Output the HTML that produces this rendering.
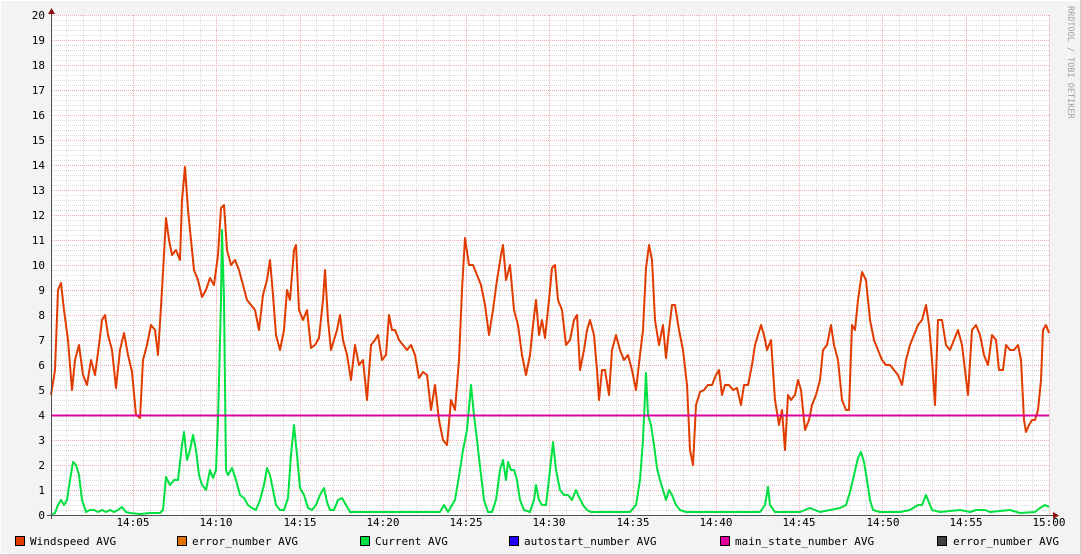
<!DOCTYPE html>
<html><head><meta charset="utf-8"><style>
body{margin:0;background:#f3f3f3;}
svg{display:block;font-family:"DejaVu Sans Mono","Liberation Mono",monospace;}
</style></head><body>
<svg width="1081" height="555" viewBox="0 0 1081 555" xmlns="http://www.w3.org/2000/svg">
<defs>
<pattern id="hm" x="0" y="15" width="2" height="5" patternUnits="userSpaceOnUse"><rect x="0" y="0" width="1" height="1" fill="#dadada" shape-rendering="crispEdges"/></pattern>
<pattern id="hM" x="0" y="15" width="2" height="25" patternUnits="userSpaceOnUse"><rect x="0" y="0" width="1" height="1" fill="#f0b0b0" shape-rendering="crispEdges"/></pattern>
</defs>
<rect x="0" y="0" width="1081" height="555" fill="#f3f3f3"/>
<path d="M0.5 554.5V0.5H1080.5" stroke="#fff" fill="none"/>
<path d="M0 554.5H1080.5V0" stroke="#cfcfcf" fill="none"/>
<rect x="51" y="15" width="998" height="500" fill="#fff"/>
<g shape-rendering="crispEdges">
<rect x="52" y="15" width="997" height="500" fill="url(#hm)"/>
<path stroke="#dadada" stroke-width="1" stroke-dasharray="1 1" fill="none" d="M66.5 15V515M83.5 15V515M100.5 15V515M116.5 15V515M150.5 15V515M166.5 15V515M183.5 15V515M200.5 15V515M233.5 15V515M250.5 15V515M266.5 15V515M283.5 15V515M316.5 15V515M333.5 15V515M350.5 15V515M366.5 15V515M399.5 15V515M416.5 15V515M433.5 15V515M449.5 15V515M483.5 15V515M499.5 15V515M516.5 15V515M533.5 15V515M566.5 15V515M583.5 15V515M599.5 15V515M616.5 15V515M649.5 15V515M666.5 15V515M683.5 15V515M699.5 15V515M733.5 15V515M749.5 15V515M766.5 15V515M783.5 15V515M816.5 15V515M832.5 15V515M849.5 15V515M866.5 15V515M899.5 15V515M916.5 15V515M932.5 15V515M949.5 15V515M982.5 15V515M999.5 15V515M1016.5 15V515M1032.5 15V515"/>
<rect x="52" y="15" width="997" height="500" fill="url(#hM)"/>
<path stroke="#f0b0b0" stroke-width="1" stroke-dasharray="1 1" fill="none" d="M133.5 15V515M216.5 15V515M300.5 15V515M383.5 15V515M466.5 15V515M549.5 15V515M633.5 15V515M716.5 15V515M799.5 15V515M882.5 15V515M966.5 15V515M1049.5 15V515"/>
</g>
<g font-size="11" fill="#000" text-anchor="end">
<text x="45" y="19">20</text><text x="45" y="44">19</text><text x="45" y="69">18</text><text x="45" y="94">17</text><text x="45" y="119">16</text><text x="45" y="144">15</text><text x="45" y="169">14</text><text x="45" y="194">13</text><text x="45" y="219">12</text><text x="45" y="244">11</text><text x="45" y="269">10</text><text x="45" y="294">9</text><text x="45" y="319">8</text><text x="45" y="344">7</text><text x="45" y="369">6</text><text x="45" y="394">5</text><text x="45" y="419">4</text><text x="45" y="444">3</text><text x="45" y="469">2</text><text x="45" y="494">1</text><text x="45" y="519">0</text>
</g>
<g font-size="11" fill="#000" text-anchor="middle">
<text x="133" y="526">14:05</text><text x="216" y="526">14:10</text><text x="300" y="526">14:15</text><text x="383" y="526">14:20</text><text x="466" y="526">14:25</text><text x="549" y="526">14:30</text><text x="633" y="526">14:35</text><text x="716" y="526">14:40</text><text x="799" y="526">14:45</text><text x="883" y="526">14:50</text><text x="966" y="526">14:55</text><text x="1049" y="526">15:00</text>
</g>
<polyline fill="none" stroke="#00e040" stroke-width="2" stroke-linejoin="round" points="51,515 55,513 58,505 61,500 64,505 67,500 70,480 73,462 76,465 79,475 82,500 86,512 90,510 94,510 98,512 102,510 106,512 110,510 114,512 118,510 122,507 126,512 130,513 140,514 150,513 160,513 163,510 166,477 170,485 174,480 178,480 182,445 184,432 187,460 190,450 193,435 196,450 199,475 202,485 206,490 210,470 213,478 216,470 218,420 221,300 222,230 224,300 226,470 228,475 232,468 236,480 240,495 244,498 248,505 252,508 256,510 260,500 264,485 267,468 270,475 273,490 276,505 280,510 284,510 288,498 291,455 294,425 297,455 300,488 304,495 308,508 312,510 316,505 320,495 324,488 327,502 330,510 334,510 338,500 342,498 346,505 350,512 380,512 400,512 430,512 440,512 444,505 448,512 455,500 460,470 463,450 467,430 471,385 474,415 477,440 481,475 484,500 488,512 492,512 496,500 500,470 503,460 506,480 508,462 511,470 514,470 517,480 520,500 524,510 530,512 534,500 536,485 539,500 542,505 546,505 550,470 553,442 556,470 560,490 564,495 568,495 572,500 576,490 579,497 583,505 587,510 591,512 600,512 630,512 636,505 640,480 643,440 646,373 648,415 651,425 654,445 657,468 660,480 663,490 666,500 669,490 672,495 676,505 680,510 686,512 760,512 765,505 768,487 770,505 775,512 800,512 810,508 820,512 830,510 840,508 846,505 850,492 854,475 858,458 861,452 864,462 867,480 870,500 873,510 880,512 900,512 910,510 918,505 922,505 926,495 928,500 932,510 940,512 960,510 970,512 976,510 985,510 990,512 1010,510 1020,513 1035,512 1040,508 1045,505 1049,507"/>
<polyline fill="none" stroke="#e03c00" stroke-width="2" stroke-linejoin="round" points="51,395 55,370 58,290 61,283 64,310 68,340 72,390 75,360 79,345 83,375 87,385 91,360 95,375 99,345 102,320 105,315 108,335 112,350 116,388 120,350 124,333 128,355 132,372 136,415 140,418 143,360 147,345 151,325 155,330 158,355 162,290 166,218 169,240 172,255 176,250 180,260 182,200 185,167 188,210 191,240 194,270 198,280 202,297 206,290 210,278 214,285 218,255 221,208 224,205 227,250 231,265 235,260 239,270 243,285 247,300 251,305 255,310 259,330 263,295 267,280 270,260 273,295 276,335 280,350 284,330 287,290 290,300 294,250 296,245 299,310 303,320 307,310 311,348 315,345 319,338 323,300 325,270 328,320 331,350 334,340 337,330 340,315 343,340 347,355 351,380 355,345 359,365 363,360 367,400 371,345 375,340 378,335 382,360 386,355 389,315 392,330 395,330 399,340 403,345 407,350 411,345 415,355 419,378 423,372 427,375 431,410 435,385 439,420 443,440 447,445 451,400 455,410 459,360 462,290 465,238 469,265 473,265 477,275 481,285 485,305 489,335 493,310 497,280 501,255 503,245 506,280 510,265 514,310 518,325 522,355 526,375 530,355 533,325 536,300 539,335 542,320 545,338 549,300 552,268 555,265 558,300 562,310 566,345 570,340 574,320 577,315 580,370 584,350 587,330 590,320 594,335 597,370 599,400 602,370 605,370 609,395 612,350 616,335 620,350 624,360 628,355 632,370 636,390 640,355 643,330 646,268 649,245 652,260 655,320 659,345 663,325 666,358 669,330 672,305 675,305 679,330 683,350 687,385 690,450 693,465 696,405 700,392 704,390 708,385 712,385 716,375 719,370 722,395 725,385 729,385 733,390 737,388 741,405 744,385 748,385 752,365 755,345 758,335 761,325 764,335 767,350 771,340 775,400 779,425 782,410 785,450 788,395 791,400 795,395 798,380 801,390 805,430 809,420 812,405 816,395 820,380 823,350 827,345 831,325 834,345 838,360 842,400 846,410 849,410 852,325 855,330 858,300 862,272 866,280 870,320 874,340 878,350 882,360 886,365 890,365 894,370 898,375 902,385 906,360 910,345 914,335 918,325 922,320 926,305 929,325 932,360 935,405 938,320 942,320 946,345 950,350 954,340 958,330 962,345 965,370 968,395 972,330 976,325 980,335 984,355 988,365 992,335 996,340 999,370 1003,370 1006,345 1010,350 1014,350 1018,345 1021,360 1024,420 1026,432 1029,425 1032,420 1035,420 1038,410 1041,380 1043,330 1046,325 1049,333"/>
<line x1="51" y1="415.5" x2="1049" y2="415.5" stroke="#e000a0" stroke-width="2"/>
<g shape-rendering="crispEdges">
<line x1="51.5" y1="10" x2="51.5" y2="519" stroke="#505050"/>
<line x1="47" y1="515.5" x2="1054" y2="515.5" stroke="#505050"/>
</g>
<path d="M48 14L51.5 8L55 14Z" fill="#8b1010"/>
<path d="M1053 512L1059 515.5L1053 519Z" fill="#8b1010"/>
<text transform="translate(1068,6) rotate(90)" font-size="8.5" fill="#a0a0a0">RRDTOOL / TOBI OETIKER</text>
<g font-size="11" fill="#000">
<rect x="15.5" y="536.5" width="9" height="9" fill="#e03c00" stroke="#000" stroke-width="1"/><text x="30" y="545">Windspeed AVG</text>
<rect x="177.5" y="536.5" width="9" height="9" fill="#e07000" stroke="#000" stroke-width="1"/><text x="192" y="545">error_number AVG</text>
<rect x="360.5" y="536.5" width="9" height="9" fill="#00e040" stroke="#000" stroke-width="1"/><text x="375" y="545">Current AVG</text>
<rect x="509.5" y="536.5" width="9" height="9" fill="#2000ff" stroke="#000" stroke-width="1"/><text x="524" y="545">autostart_number AVG</text>
<rect x="720.5" y="536.5" width="9" height="9" fill="#e000a0" stroke="#000" stroke-width="1"/><text x="735" y="545">main_state_number AVG</text>
<rect x="937.5" y="536.5" width="9" height="9" fill="#404040" stroke="#000" stroke-width="1"/><text x="953" y="545">error_number AVG</text>
</g>
</svg>
</body></html>
